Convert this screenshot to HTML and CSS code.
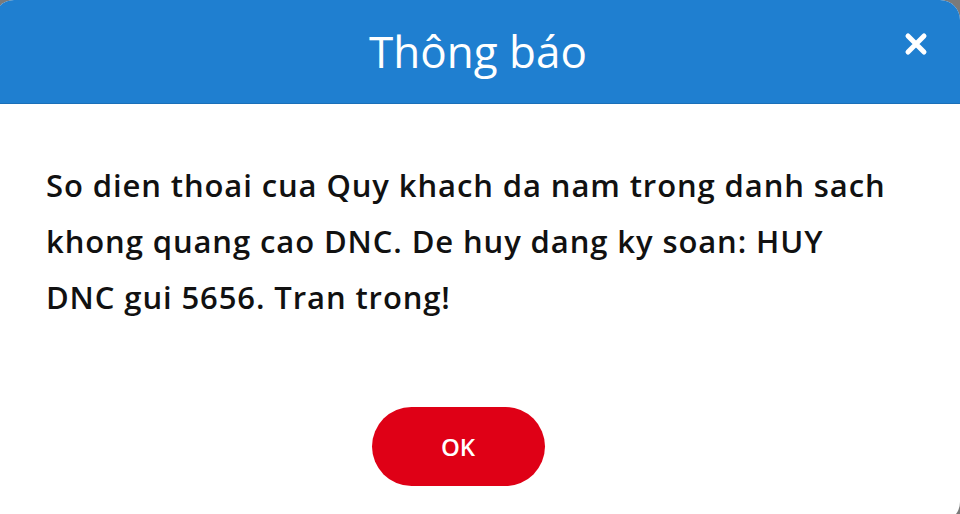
FILE: index.html
```html
<!DOCTYPE html>
<html lang="vi">
<head>
<meta charset="utf-8">
<title>Thông báo</title>
<link rel="stylesheet" href="styles.css">
</head>
<body>
<div class="dialog">
  <div class="header">
    <h1 class="title">Thông báo</h1>
    <button class="close" aria-label="Đóng">
      <svg viewBox="0 0 24 24" width="24" height="24"><path d="M4 4 L20 20 M20 4 L4 20" stroke="#fff" stroke-width="5" stroke-linecap="round" fill="none"/></svg>
    </button>
  </div>
  <div class="content">
    <p class="message">So dien thoai cua Quy khach da nam trong danh sach khong quang cao DNC. De huy dang ky soan: HUY DNC gui 5656. Tran trong!</p>
  </div>
  <div class="footer">
    <button class="ok">OK</button>
  </div>
</div>
</body>
</html>
```

FILE: styles.css
```css
html, body {
  margin: 0;
  padding: 0;
  height: 100%;
}
body {
  background: #7a7a7a;
  overflow: hidden;
  font-family: "Open Sans", "Noto Sans", sans-serif;
}
.dialog {
  width: 966px;
  height: 522px;
  margin-left: -6px;
  background: #fff;
  border-radius: 20px;
  overflow: hidden;
  display: flex;
  flex-direction: column;
}
.header {
  position: relative;
  height: 103px;
  flex: none;
  background: #1f7fd0;
  border-bottom: 1px solid #1a6fb8;
  display: flex;
  align-items: center;
  justify-content: center;
}
.title {
  margin: 0;
  color: #fff;
  font-weight: 400;
  font-size: 44px;
  padding-left: 2px;
  padding-bottom: 2px;
}
.close {
  position: absolute;
  right: 32px;
  top: 32px;
  width: 24px;
  height: 24px;
  padding: 0;
  border: 0;
  background: none;
  display: flex;
}
.content {
  padding: 53px 66px 0 52px;
}
.message {
  margin: 0;
  font-size: 31px;
  letter-spacing: 0.9px;
  font-weight: 600;
  line-height: 56px;
  color: #111;
}
.footer {
  display: flex;
  justify-content: center;
  padding-top: 82px;
  padding-right: 38px;
}
.ok {
  width: 173px;
  height: 79px;
  border: 0;
  border-radius: 40px;
  background: #df0016;
  color: #fff;
  font-family: "Open Sans", "Noto Sans", sans-serif;
  font-weight: 600;
  font-size: 24px;
}
```
